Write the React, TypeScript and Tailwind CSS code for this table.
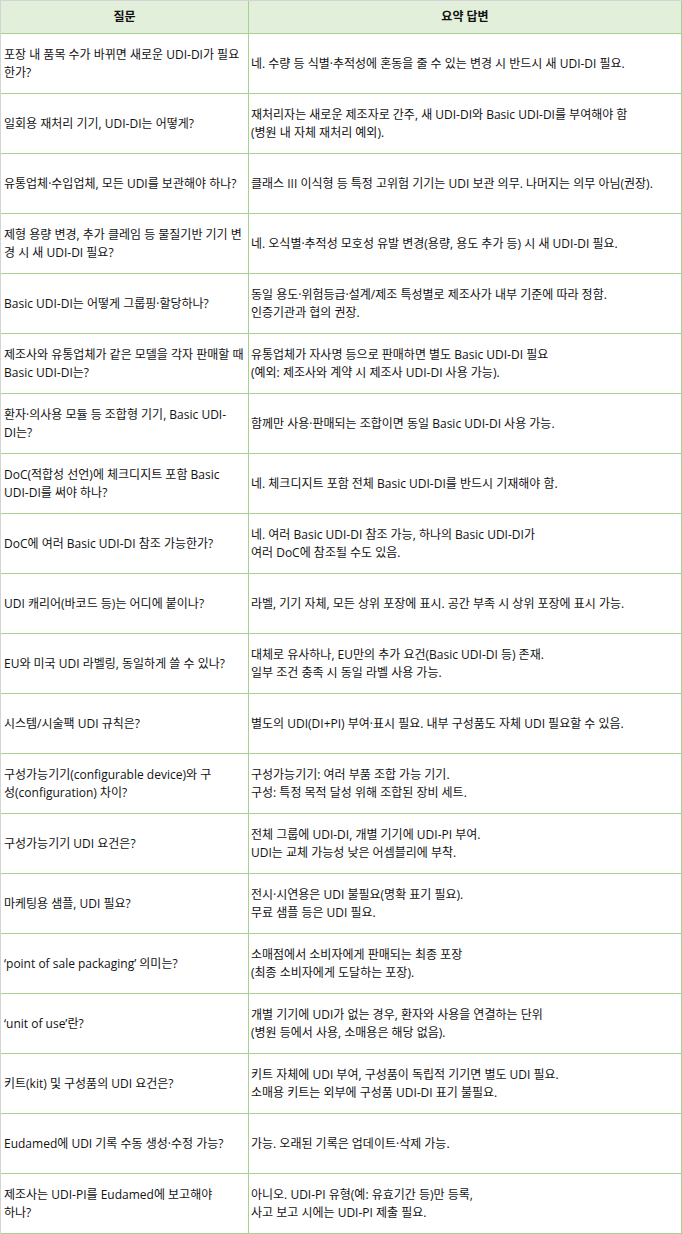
import React from 'react';

type Row = { q: string[]; a: string[] };

const rows: Row[] = [
  { q: ['포장 내 품목 수가 바뀌면 새로운 UDI-DI가 필요', '한가?'], a: ['네. 수량 등 식별·추적성에 혼동을 줄 수 있는 변경 시 반드시 새 UDI-DI 필요.'] },
  { q: ['일회용 재처리 기기, UDI-DI는 어떻게?'], a: ['재처리자는 새로운 제조자로 간주, 새 UDI-DI와 Basic UDI-DI를 부여해야 함', '(병원 내 자체 재처리 예외).'] },
  { q: ['유통업체·수입업체, 모든 UDI를 보관해야 하나?'], a: ['클래스 III 이식형 등 특정 고위험 기기는 UDI 보관 의무. 나머지는 의무 아님(권장).'] },
  { q: ['제형 용량 변경, 추가 클레임 등 물질기반 기기 변', '경 시 새 UDI-DI 필요?'], a: ['네. 오식별·추적성 모호성 유발 변경(용량, 용도 추가 등) 시 새 UDI-DI 필요.'] },
  { q: ['Basic UDI-DI는 어떻게 그룹핑·할당하나?'], a: ['동일 용도·위험등급·설계/제조 특성별로 제조사가 내부 기준에 따라 정함.', '인증기관과 협의 권장.'] },
  { q: ['제조사와 유통업체가 같은 모델을 각자 판매할 때', 'Basic UDI-DI는?'], a: ['유통업체가 자사명 등으로 판매하면 별도 Basic UDI-DI 필요', '(예외: 제조사와 계약 시 제조사 UDI-DI 사용 가능).'] },
  { q: ['환자·의사용 모듈 등 조합형 기기, Basic UDI-', 'DI는?'], a: ['함께만 사용·판매되는 조합이면 동일 Basic UDI-DI 사용 가능.'] },
  { q: ['DoC(적합성 선언)에 체크디지트 포함 Basic', 'UDI-DI를 써야 하나?'], a: ['네. 체크디지트 포함 전체 Basic UDI-DI를 반드시 기재해야 함.'] },
  { q: ['DoC에 여러 Basic UDI-DI 참조 가능한가?'], a: ['네. 여러 Basic UDI-DI 참조 가능, 하나의 Basic UDI-DI가', '여러 DoC에 참조될 수도 있음.'] },
  { q: ['UDI 캐리어(바코드 등)는 어디에 붙이나?'], a: ['라벨, 기기 자체, 모든 상위 포장에 표시. 공간 부족 시 상위 포장에 표시 가능.'] },
  { q: ['EU와 미국 UDI 라벨링, 동일하게 쓸 수 있나?'], a: ['대체로 유사하나, EU만의 추가 요건(Basic UDI-DI 등) 존재.', '일부 조건 충족 시 동일 라벨 사용 가능.'] },
  { q: ['시스템/시술팩 UDI 규칙은?'], a: ['별도의 UDI(DI+PI) 부여·표시 필요. 내부 구성품도 자체 UDI 필요할 수 있음.'] },
  { q: ['구성가능기기(configurable device)와 구', '성(configuration) 차이?'], a: ['구성가능기기: 여러 부품 조합 가능 기기.', '구성: 특정 목적 달성 위해 조합된 장비 세트.'] },
  { q: ['구성가능기기 UDI 요건은?'], a: ['전체 그룹에 UDI-DI, 개별 기기에 UDI-PI 부여.', 'UDI는 교체 가능성 낮은 어셈블리에 부착.'] },
  { q: ['마케팅용 샘플, UDI 필요?'], a: ['전시·시연용은 UDI 불필요(명확 표기 필요).', '무료 샘플 등은 UDI 필요.'] },
  { q: ['‘point of sale packaging’ 의미는?'], a: ['소매점에서 소비자에게 판매되는 최종 포장', '(최종 소비자에게 도달하는 포장).'] },
  { q: ['‘unit of use’란?'], a: ['개별 기기에 UDI가 없는 경우, 환자와 사용을 연결하는 단위', '(병원 등에서 사용, 소매용은 해당 없음).'] },
  { q: ['키트(kit) 및 구성품의 UDI 요건은?'], a: ['키트 자체에 UDI 부여, 구성품이 독립적 기기면 별도 UDI 필요.', '소매용 키트는 외부에 구성품 UDI-DI 표기 불필요.'] },
  { q: ['Eudamed에 UDI 기록 수동 생성·수정 가능?'], a: ['가능. 오래된 기록은 업데이트·삭제 가능.'] },
  { q: ['제조사는 UDI-PI를 Eudamed에 보고해야', '하나?'], a: ['아니오. UDI-PI 유형(예: 유효기간 등)만 등록,', '사고 보고 시에는 UDI-PI 제출 필요.'] },
];

function Lines({ lines }: { lines: string[] }) {
  return (
    <>
      {lines.map((l, i) => (
        <div key={i} className="whitespace-nowrap">{l}</div>
      ))}
    </>
  );
}

export default function App() {
  return (
    <div className="w-[682px] h-[1234px] bg-white border-t border-l border-[#d4d4d4] font-['Open_Sans','Noto_Sans_CJK_KR',sans-serif] text-[12px] leading-[18px] text-[#111111] overflow-hidden">
      <div className="grid grid-cols-[248px_433px]">
        <div className="h-[33px] bg-[#e2efda] border-r border-b border-[#a9d08e] flex items-center justify-center font-semibold">질문</div>
        <div className="h-[33px] bg-[#e2efda] border-r border-b border-[#a9d08e] flex items-center justify-center font-semibold">요약 답변</div>
        {rows.map((r, i) => (
          <React.Fragment key={i}>
            <div className="h-[60px] border-r border-b border-[#a9d08e] flex flex-col justify-center pl-[3px] overflow-hidden">
              <Lines lines={r.q} />
            </div>
            <div className="h-[60px] border-r border-b border-[#a9d08e] flex flex-col justify-center pl-[2px] overflow-hidden">
              <Lines lines={r.a} />
            </div>
          </React.Fragment>
        ))}
      </div>
    </div>
  );
}
